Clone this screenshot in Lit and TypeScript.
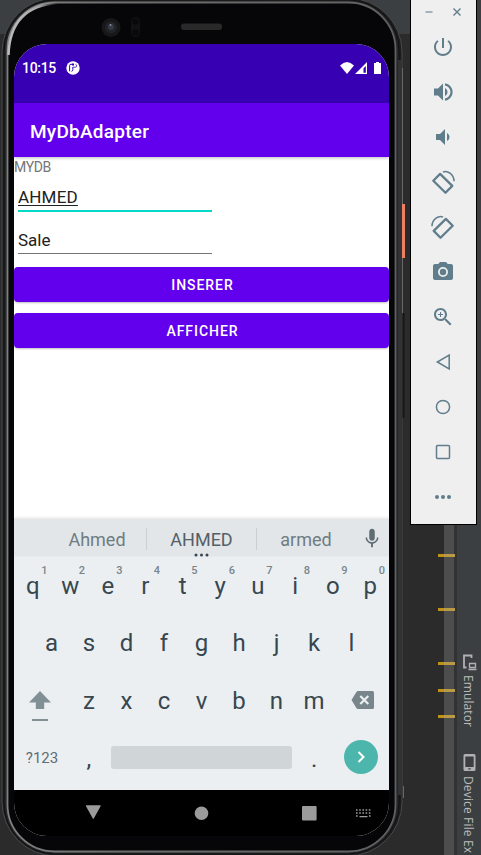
import { LitElement, html, css, svg } from "lit";
import { customElement } from "lit/decorators.js";

const P = (d: string) => svg`<path d=${d}></path>`;

const TOOLS = [
  P("M13 3h-2v10h2V3zm4.83 2.17l-1.42 1.42C17.99 7.86 19 9.81 19 12c0 3.87-3.13 7-7 7s-7-3.13-7-7c0-2.19 1.01-4.14 2.58-5.42L6.17 5.17C4.23 6.82 3 9.26 3 12c0 4.97 4.03 9 9 9s9-4.03 9-9c0-2.74-1.23-5.18-3.17-6.83z"),
  svg`<path d="M3 8.500v7h4l5 5v-17l-5 5z"></path><path d="M16.500 12c0-1.770-1.020-3.290-2.500-4.030v8.050c1.480-.730 2.500-2.250 2.500-4.020z"></path><path fill="none" stroke="currentColor" stroke-width="2.200" d="M14 4.300a7.800 7.800 0 0 1 0 15.400"></path>`,
  P("M5 9v6h4l5 5V4L9 9H5zm13.500 3c0-1.770-1.020-3.290-2.500-4.030v8.050c1.480-.730 2.500-2.250 2.500-4.020z"),
  svg`<g fill="none" stroke="currentColor"><path stroke-width="2.300" stroke-linejoin="round" d="M2.300 10.700 9.100 3.900 21.300 15.900 14.500 22.700z"></path><path stroke-width="1.500" d="M12 2.200q3-2 7 1t4 8"></path></g>`,
  svg`<g fill="none" stroke="currentColor"><path stroke-width="2.300" stroke-linejoin="round" d="M21.700 10.700 14.900 3.900 2.700 15.900 9.500 22.700z"></path><path stroke-width="1.500" d="M12 2.200q-3-2-7 1t-4 8"></path></g>`,
  svg`<circle cx="12" cy="12" r="3.200" ></circle><path fill-rule="evenodd" d="M9 2 7.200 4H4c-1.100 0-2 .9-2 2v12c0 1.100.9 2 2 2h16c1.100 0 2-.9 2-2V6c0-1.100-.9-2-2-2h-3.200L15 2H9zm3 15a5 5 0 1 1 0-10 5 5 0 0 1 0 10z"></path>`,
  P("M15.500 14h-.790l-.280-.270C15.410 12.590 16 11.110 16 9.500 16 5.910 13.090 3 9.500 3S3 5.910 3 9.500 5.910 16 9.500 16c1.610 0 3.090-.590 4.230-1.570l.270.280v.790l5 4.990L20.490 19l-4.990-5zm-6 0C7.010 14 5 11.990 5 9.500S7.010 5 9.500 5 14 7.010 14 9.500 11.990 14 9.500 14zm2.500-4h-2v2H9v-2H7V9h2V7h1v2h2v1z"),
  svg`<path fill="none" stroke="currentColor" stroke-width="1.500" d="M18.200 5v14L6.300 12z"></path>`,
  svg`<circle cx="12" cy="12" r="6.600" fill="none" stroke="currentColor" stroke-width="1.500"></circle>`,
  svg`<rect x="5.500" y="5.500" width="13" height="13" rx="1" fill="none" stroke="currentColor" stroke-width="1.500"></rect>`,
  svg`<circle cx="6" cy="12" r="2"></circle><circle cx="12" cy="12" r="2"></circle><circle cx="18" cy="12" r="2"></circle>`,
];

@customElement("emulator-toolbar")
export class EmulatorToolbar extends LitElement {
  static styles = css`
    :host { display: flex; flex-direction: column; box-sizing: border-box; background: #efefef; border: 1px solid #000; border-top: 0; color: #607d8b; }
    .caption { height: 24px; display: flex; justify-content: space-between; padding: 0 14px 0 13px; align-items: center; }
    .caption svg { width: 10px; height: 10px; }
    .tools { display: flex; flex-direction: column; align-items: center; padding-right: 2px; }
    .tool { height: 45px; display: flex; align-items: center; }
    .tool svg { width: 24px; height: 24px; fill: currentColor; overflow: visible; }
  `;
  render() {
    return html`
      <div class="caption">
        <svg viewBox="0 0 10 10"><path d="M1.500 5h7" stroke="#90a4ae" stroke-width="1.600"></path></svg>
        <svg viewBox="0 0 10 10"><path d="M1.500 1.500l7 7m0-7l-7 7" stroke="#607d8b" stroke-width="1.400"></path></svg>
      </div>
      <div class="tools">
        ${TOOLS.map((t) => html`<div class="tool"><svg viewBox="0 0 24 24">${t}</svg></div>`)}
      </div>`;
  }
}

@customElement("soft-keyboard")
export class SoftKeyboard extends LitElement {
  static styles = css`
    :host { display: flex; flex-direction: column; height: 271px; background: #ebeff2; color: #37474f; box-shadow: 0 -1px 3px rgba(0,0,0,.12); }
    .suggest { height: 38px; box-sizing: border-box; background: #e2e6e9; display: grid; grid-template-columns: 28px 104px 111px 97px 35px; align-items: center; font-size: 18px; color: #6f7c82; border-bottom: 1px solid #e7ebed; }
    .word { height: 37px; line-height: 42px; text-align: center; position: relative; }
    .first { padding-left: 6px; }
    .last { padding-left: 1px; }
    .word.main { color: #546067; }
    .word.main::before, .word.main::after { content: ""; position: absolute; top: 9px; height: 22px; width: 1px; background: #cacfd2; }
    .word.main::before { left: 0; }
    .word.main::after { right: 0; }
    .more { position: absolute; left: 47.500px; top: 33.500px; width: 15px; height: 4px; }
    .mic { width: 22px; height: 22px; margin: 1px 0 0 7px; fill: #5f6c73; }
    .keys { display: flex; flex-direction: column; }
    .row { height: 57.25px; display: flex; justify-content: center; }
    .key { width: 37.5px; line-height: 59.500px; font-size: 24px; text-align: center; position: relative; }
    .hint { position: absolute; right: 4px; top: 7px; font-size: 11px; line-height: 13px; font-weight: 500; color: #78868c; }
    .wide { width: 56.25px; display: flex; align-items: center; justify-content: center; }
    .shift { width: 24px; height: 34px; margin: 9px 4px 0 0; }
    .back { width: 24px; height: 18px; margin-left: 5px; }
    .mode { font-size: 15px; color: #5f6c73; padding-top: 1px; box-sizing: border-box; }
    .space { width: 181px; height: 23px; margin: 17.500px 3.500px 0; border-radius: 3px; background: #d0d5d8; flex: none; }
    .low { line-height: 60px; }
    .go { width: 34px; height: 34px; margin-left: .5px; }
  `;
  private letters(s: string, hints = false) {
    return [...s].map((c, i) => html`<div class="key">${c}${hints ? html`<span class="hint">${(i + 1) % 10}</span>` : ""}</div>`);
  }
  render() {
    return html`
      <div class="suggest">
        <span></span>
        <span class="word first">Ahmed</span>
        <span class="word main">AHMED<svg class="more" viewBox="0 0 15 4" fill="#37474f"><circle cx="2" cy="2" r="1.500"></circle><circle cx="7.500" cy="2" r="1.500"></circle><circle cx="13" cy="2" r="1.500"></circle></svg></span>
        <span class="word last">armed</span>
        <svg class="mic" viewBox="0 0 24 24"><path d="M12 15c1.660 0 3-1.340 3-3V5c0-1.660-1.340-3-3-3S9 3.340 9 5v7c0 1.660 1.340 3 3 3z"></path><path d="M17.300 11.500c0 3-2.540 5.100-5.300 5.100s-5.300-2.100-5.300-5.100H5c0 3.410 2.720 6.230 6 6.720V22h2v-3.780c3.280-.480 6-3.300 6-6.720h-1.700z"></path></svg>
      </div>
      <div class="keys">
        <div class="row">${this.letters("qwertyuiop", true)}</div>
        <div class="row">${this.letters("asdfghjkl")}</div>
        <div class="row">
          <div class="wide"><svg class="shift" viewBox="0 0 24 34"><path fill="#809095" d="M12 3 23 14.500h-6.800V21H7.800v-6.500H1z"></path><path fill="#809095" d="M4 31h16v2H4z"></path></svg></div>
          ${this.letters("zxcvbnm")}
          <div class="wide"><svg class="back" viewBox="0 0 24 18"><path fill="#78868c" d="M7 0h14.500q1.500 0 1.500 1.500v15q0 1.500-1.500 1.500H7q-1 0-1.600-.9L.5 9 5.400.9Q6 0 7 0z"></path><path stroke="#ebeff2" stroke-width="2.200" d="M9.300 5l8 8m0-8l-8 8"></path></svg></div>
        </div>
        <div class="row">
          <div class="wide mode">?123</div>
          <div class="key low">,</div>
          <div class="space"></div>
          <div class="key low">.</div>
          <div class="wide"><svg class="go" viewBox="0 0 34 34"><circle cx="17" cy="17" r="17" fill="#4db6ac"></circle><path d="M14.500 12l5 5-5 5" fill="none" stroke="#fff" stroke-width="2"></path></svg></div>
        </div>
      </div>`;
  }
}

@customElement("phone-screen")
export class PhoneScreen extends LitElement {
  static styles = css`
    :host { display: flex; flex-direction: column; width: 375px; height: 792px; overflow: hidden; border-radius: 33px; background: #fff; }
    .status { height: 59px; box-sizing: border-box; background: #3700b3; color: #fff; display: flex; padding: 16px 7px 0 8px; font-size: 14px; letter-spacing: -.3px; font-weight: 500; line-height: 17px; }
    .logo { width: 14px; height: 14px; margin: 1px auto 0 10px; }
    .signals { width: 43px; height: 14px; margin-top: 1px; }
    .bar { height: 54px; background: #6200ee; color: #fff; font-size: 19px; font-weight: 500; line-height: 57px; padding-left: 16px; letter-spacing: .25px; position: relative; box-shadow: 0 1px 3px rgba(0,0,0,.25); }
    .content { height: 362px; display: flex; flex-direction: column; color: #212121; }
    .label { height: 20px; line-height: 20px; font-size: 14px; letter-spacing: -.4px; color: #757575; }
    .field { width: 194px; margin-left: 4px; box-sizing: border-box; font-size: 17px; line-height: 20px; }
    .name { height: 35px; padding-top: 10px; border-bottom: 2px solid #03dac5; letter-spacing: .2px; text-decoration: underline; text-decoration-thickness: 1px; text-underline-offset: 2px; }
    .sale { height: 42px; padding-top: 18px; border-bottom: 1px solid #757575; }
    .btn { height: 35px; border-radius: 4px; background: #6200ee; color: #fff; font-size: 14px; font-weight: 500; letter-spacing: .95px; line-height: 37px; text-align: center; padding-left: 2px; box-shadow: 0 1px 2px rgba(0,0,0,.25); margin-bottom: 11px; }
    .first { margin-top: 13px; }
    .nav { height: 46px; background: #000; flex: none; }
    .nav svg { display: block; width: 375px; height: 46px; }
  `;
  render() {
    return html`
      <div class="status">
        <span>10:15</span>
        <svg class="logo" viewBox="0 0 14 14"><circle cx="7" cy="7" r="6.700" fill="#fff"></circle><path d="M3.600 10.300V4.500q0-1.200 1.400-1.200h1.500M5.500 10.400q1.300-.3 1.300-1.800V6" fill="none" stroke="#3700b3" stroke-width="1"></path><path d="M6 2.500h2v2H6z" fill="#3700b3"></path><path d="M7 6.200h2.200q1.500 0 1.500-1.300T9.500 3.300" fill="none" stroke="#3700b3" stroke-width=".8"></path></svg>
        <svg class="signals" viewBox="0 0 43 14" fill="#fff"><path d="M1 4.500Q8-2.500 15 4.500L8 13z"></path><path fill-rule="evenodd" d="M28 1v12H16zM26.800 5 24.500 7.300V11.800h2.300z"></path><path d="M35 2h2V1h3v1h2v11h-7z"></path></svg>
      </div>
      <div class="bar">MyDbAdapter</div>
      <div class="content">
        <div class="label">MYDB</div>
        <div class="field name">AHMED</div>
        <div class="field sale">Sale</div>
        <div class="btn first">INSERER</div>
        <div class="btn">AFFICHER</div>
      </div>
      <soft-keyboard></soft-keyboard>
      <div class="nav"><svg viewBox="0 0 375 46" fill="#9b9b9b">
        <path d="M72.500 15.300h13.500q1.200 0 .6 1L79.800 28.400q-.5.800-1 0L72 16.300q-.6-1 .5-1z"></path>
        <circle cx="187.500" cy="23.300" r="6.800"></circle><rect x="288" y="16" width="14.600" height="14.600" rx="1"></rect>
        <path stroke="#9b9b9b" stroke-width="1.600" stroke-dasharray="1.600 1.600" d="M342 20h15M342 23h15"></path><path d="M345.500 26h8v1.200h-8z M342 25.200h1.600v1.500H342z M355 25.200h1.600v1.500H355z"></path>
      </svg></div>`;
  }
}

@customElement("app-root")
export class AppRoot extends LitElement {
  static styles = css`
    :host { display: block; position: relative; width: 481px; height: 855px; overflow: hidden; background: #2b2b2b; font-family: Roboto, sans-serif; }
    .ide { height: 855px; display: grid; grid-template-columns: 444px 10px 3px 24px; }
    .editor { background: linear-gradient(#3c3f41 34px, #2b2b2b 34px); }
    .gutter { background: #4d4d4d; position: relative; }
    .mark { position: absolute; left: -6px; width: 17px; height: 3px; background: linear-gradient(90deg, #be9117 6px, #b99a45 6px); }
    .edge { background: #323232; }
    .side { background: #3c3f41; box-sizing: border-box; height: 855px; padding: 654px 0 0 0; color: #bbb; font: 12px "Open Sans", sans-serif; overflow: hidden; display: flex; flex-direction: column; }
    .tab { writing-mode: vertical-rl; display: flex; align-items: center; white-space: nowrap; width: 22px; line-height: 22px; flex: none; }
    .tab svg { width: 15px; height: 17px; margin: 0 0 4px 3px; flex: none; }
    .tab.emu { height: 100px; letter-spacing: .1px; }
    .tab.dev { letter-spacing: .15px; }
    .dev svg { margin-bottom: 5px; }
    .phone { position: absolute; left: 0; top: 0; width: 404px; height: 855px; }
    .shell { display: block; width: 410px; height: 855px; }
    .screen { position: absolute; left: 14px; top: 44px; }
    .toolbar { position: absolute; left: 410px; top: 0; width: 67px; height: 525px; }
  `;
  render() {
    return html`
      <div class="ide">
        <div class="editor"></div>
        <div class="gutter">${[554, 608, 662, 689, 715].map((y) => html`<i class="mark" style="top:${y}px"></i>`)}</div>
        <div class="edge"></div>
        <div class="side">
          <div class="tab emu"><svg viewBox="0 0 15 17"><path d="M9.500 4V1.500H2v12h2.500" fill="none" stroke="#afb1b3" stroke-width="1.800"></path><path d="M7.500 9.500h6v4h-6zM6.500 15.500h8" fill="none" stroke="#afb1b3" stroke-width="1.300"></path></svg><span>Emulator</span></div>
          <div class="tab dev"><svg viewBox="0 0 15 17"><path fill-rule="evenodd" fill="#afb1b3" d="M3 0h9q1.500 0 1.500 1.500v14Q13.500 17 12 17H3q-1.500 0-1.500-1.500v-14Q1.500 0 3 0zM3.300 2.500v10.500h8.400V2.500zM6.300 14.300v1.200h2.400v-1.200z"></path></svg><span>Device File Ex</span></div>
        </div>
      </div>
      <div class="phone">
        <svg class="shell" viewBox="0 0 410 855">
          <defs>
            <linearGradient id="rim" x1="0" x2="1" y1="0" y2="0"><stop offset="0" stop-color="#808080"></stop><stop offset=".3" stop-color="#6c6c6c"></stop><stop offset="1" stop-color="#606060"></stop></linearGradient>
            <linearGradient id="shine" x1="0" x2="1" y1="0" y2="0"><stop offset="0" stop-color="#bbb"></stop><stop offset=".6" stop-color="#aaa"></stop><stop offset="1" stop-color="#aaa" stop-opacity="0"></stop></linearGradient>
          </defs>
          <rect x="2" y="-2" width="400" height="858" rx="54" fill="#1b1c1d" stroke="#494a4b"></rect>
          <rect x="4" y="0" width="395" height="854" rx="51" fill="#242627" stroke="#111"></rect>
          <rect x="7.500" y="2.500" width="388" height="849" rx="47" fill="#060608" stroke="url(#rim)" stroke-width="1.800"></rect>
          <path d="M8.500 55Q10 6 58 3" fill="none" stroke="url(#shine)" stroke-width="2.500"></path>
          <path d="M399.500 60v735" stroke="#303234" stroke-width="3"></path>
          <path d="M402.500 68v245M403.500 786v12" stroke="#686868"></path>
          <path d="M403.500 313v105" stroke="#161616" stroke-width="2"></path>
          <rect x="402" y="204" width="3" height="54" fill="#ee7f63"></rect>
          <circle cx="111" cy="27.500" r="9.500" fill="#171718"></circle><circle cx="111" cy="27.500" r="6" fill="#222327"></circle><circle cx="111" cy="27" r="3" fill="#353a48"></circle><circle cx="110.500" cy="25" r="1" fill="#85899a"></circle>
          <rect x="131" y="17" width="9" height="20" rx="4.500" fill="#121213"></rect><circle cx="135.500" cy="21.500" r="3.300" fill="#09090a"></circle><circle cx="135.500" cy="32.500" r="3.300" fill="#09090a"></circle>
          <rect x="181" y="23.500" width="41" height="6.500" rx="3" fill="#29292a"></rect>
        </svg>
        <phone-screen class="screen"></phone-screen>
      </div>
      <emulator-toolbar class="toolbar"></emulator-toolbar>`;
  }
}
